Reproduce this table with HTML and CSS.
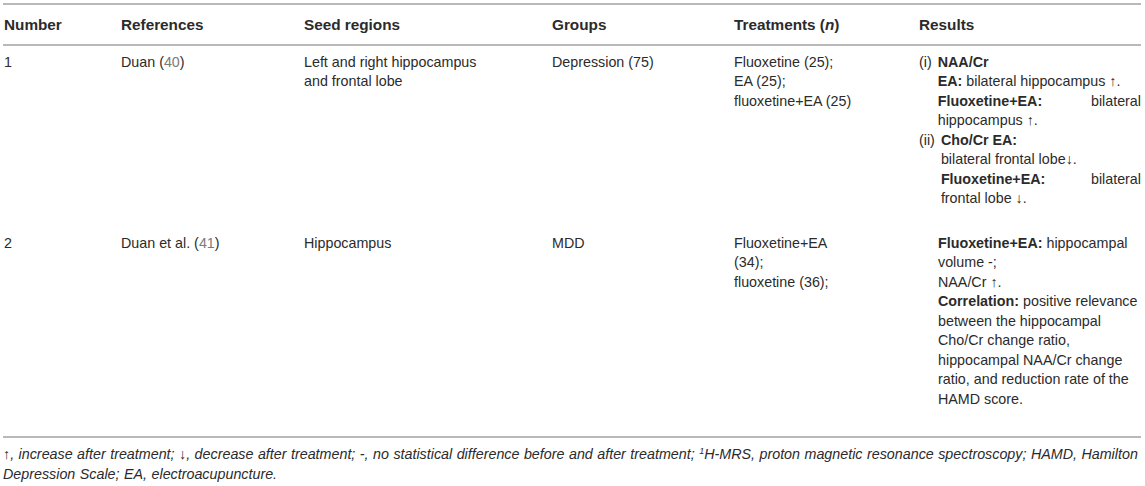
FILE: index.html
```html
<!DOCTYPE html>
<html lang="en">
<head>
    <meta charset="UTF-8">
    <title>Table</title>
    <link rel="stylesheet" href="styles.css">
</head>
<body>
    <div class="wrap">
    <table class="data">
        <colgroup>
            <col class="c-num">
            <col class="c-ref">
            <col class="c-seed">
            <col class="c-grp">
            <col class="c-trt">
            <col class="c-res">
        </colgroup>
        <thead>
            <tr>
                <th>Number</th>
                <th>References</th>
                <th>Seed regions</th>
                <th>Groups</th>
                <th>Treatments (<i>n</i>)</th>
                <th>Results</th>
            </tr>
        </thead>
        <tbody>
            <tr>
                <td>1</td>
                <td>Duan (<span class="cite">40</span>)</td>
                <td class="seed">Left and right hippocampus and frontal lobe</td>
                <td>Depression (75)</td>
                <td>Fluoxetine (25);<br>EA (25);<br>fluoxetine+EA (25)</td>
                <td>
                    <div class="item">
                        <span class="mark">(i)</span>
                        <div class="body"><b>NAA/Cr</b><br><b>EA:</b> bilateral hippocampus ↑.<br><b>Fluoxetine+EA:</b> bilateral hippocampus ↑.</div>
                    </div>
                    <div class="item">
                        <span class="mark">(ii)</span>
                        <div class="body"><b>Cho/Cr EA:</b><br>bilateral frontal lobe↓.<br><b>Fluoxetine+EA:</b> bilateral frontal lobe ↓.</div>
                    </div>
                </td>
            </tr>
            <tr>
                <td>2</td>
                <td>Duan et al. (<span class="cite">41</span>)</td>
                <td class="seed">Hippocampus</td>
                <td>MDD</td>
                <td>Fluoxetine+EA<br>(34);<br>fluoxetine (36);</td>
                <td>
                    <div class="plain"><b>Fluoxetine+EA:</b> hippocampal volume -;<br>NAA/Cr ↑.<br><b>Correlation:</b> positive relevance between the hippocampal Cho/Cr change ratio, hippocampal NAA/Cr change ratio, and reduction rate of the HAMD score.</div>
                </td>
            </tr>
        </tbody>
    </table>
    <p class="note">↑, increase after treatment; ↓, decrease after treatment; -, no statistical difference before and after treatment; <sup>1</sup>H-MRS, proton magnetic resonance spectroscopy; HAMD, Hamilton Depression Scale; EA, electroacupuncture.</p>
    </div>
</body>
</html>
```

FILE: styles.css
```css
body {
    margin: 0;
    background: #fff;
    color: #2b2b2b;
    font-family: "Liberation Sans", Arial, sans-serif;
}
.wrap {
    padding: 3px 4px 0 3px;
}
table.data {
    width: 1138px;
    border-collapse: collapse;
    table-layout: fixed;
    font-size: 14.3px;
    line-height: 19.5px;
}
col.c-num { width: 117px; }
col.c-ref { width: 183px; }
col.c-seed { width: 248px; }
col.c-grp { width: 182px; }
col.c-trt { width: 185px; }
col.c-res { width: 223px; }

table.data th {
    text-align: left;
    font-weight: bold;
    font-size: 15.3px;
    padding: 10px 0 9px 1px;
    border-top: 2px solid #b9b9b9;
    border-bottom: 2px solid #b9b9b9;
}
table.data td {
    vertical-align: top;
    padding: 7px 20px 18px 1px;
}
table.data td.seed {
    padding-right: 50px;
}
table.data td:last-child {
    padding-right: 0;
}
table.data tbody tr:last-child td {
    padding-bottom: 27px;
    border-bottom: 2px solid #b9b9b9;
}
.cite {
    color: #7a7a7a;
}
.item {
    display: flex;
    gap: 6px;
    text-align: justify;
}
.item .body {
    flex: 1;
}
.plain {
    padding-left: 19px;
}
.note {
    margin: 6px 0 0 0;
    font-style: italic;
    font-size: 14.3px;
    word-spacing: 0.5px;
    line-height: 20px;
}
.note sup {
    font-size: 9px;
    vertical-align: 5px;
    line-height: 0;
}
```
